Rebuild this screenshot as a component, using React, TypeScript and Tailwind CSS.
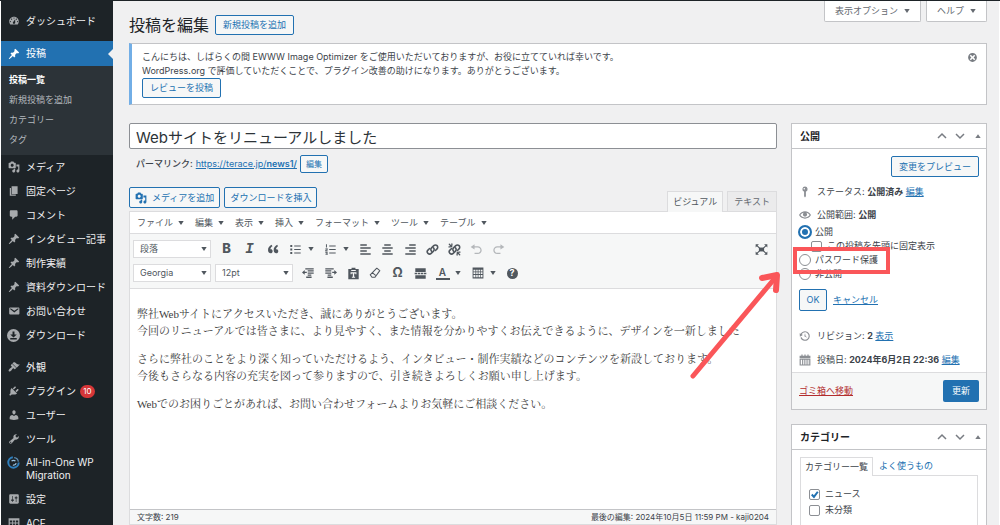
import { useState } from 'react';
import type { ReactNode } from 'react';
import clsx from 'clsx';

const paths = {
    dashboard: 'M3.76 16h12.48c1.1-1.37 1.76-3.11 1.76-5 0-4.42-3.58-8-8-8s-8 3.58-8 8c0 1.89.66 3.63 1.76 5zM10 4c.55 0 1 .45 1 1s-.45 1-1 1-1-.45-1-1 .45-1 1-1zM6 6c.55 0 1 .45 1 1s-.45 1-1 1-1-.45-1-1 .45-1 1-1zm8 0c.55 0 1 .45 1 1s-.45 1-1 1-1-.45-1-1 .45-1 1-1zm-5.37 5.55L12 7v6c0 1.1-.9 2-2 2s-2-.9-2-2c0-.57.24-1.08.63-1.45zM4 10c.55 0 1 .45 1 1s-.45 1-1 1-1-.45-1-1 .45-1 1-1zm12 0c.55 0 1 .45 1 1s-.45 1-1 1-1-.45-1-1 .45-1 1-1z',
    pin: 'M10.44 3.02l1.82-1.82 6.36 6.35-1.83 1.82c-1.05-.68-2.48-.57-3.41.36l-.75.75c-.92.93-1.04 2.35-.35 3.41l-1.83 1.82-2.41-2.41-2.8 2.79c-.42.42-3.38 2.71-3.8 2.29s1.86-3.39 2.28-3.81l2.79-2.79L4.1 9.36l1.83-1.82c1.05.69 2.48.57 3.4-.36l.75-.75c.93-.92 1.05-2.35.36-3.41z',
    media: 'M13 11V4c0-.55-.45-1-1-1h-1.67L9 1H5L3.67 3H2c-.55 0-1 .45-1 1v7c0 .55.45 1 1 1h10c.55 0 1-.45 1-1zM7 4.5c1.38 0 2.5 1.12 2.5 2.5S8.38 9.5 7 9.5 4.5 8.38 4.5 7 5.62 4.5 7 4.5zM14 6h5v10.5c0 1.38-1.12 2.5-2.5 2.5S14 17.88 14 16.5s1.12-2.5 2.5-2.5c.17 0 .34.02.5.05V9h-3V6zm-4 8.05V13h2v3.5c0 1.38-1.12 2.5-2.5 2.5S7 17.88 7 16.5 8.12 14 9.5 14c.17 0 .34.02.5.05z',
    page: 'M6 15V2h10v13H6zm-1 1h8v2H3V5h2v11z',
    comment: 'M5 2h9c1.1 0 2 .9 2 2v7c0 1.1-.9 2-2 2h-2l-5 5v-5H5c-1.1 0-2-.9-2-2V4c0-1.1.9-2 2-2z',
    mail: 'M3.87 4h13.25C18.37 4 19 4.59 19 5.79v8.42c0 1.19-.63 1.79-1.88 1.79H3.87c-1.25 0-1.88-.6-1.88-1.79V5.79c0-1.2.63-1.79 1.88-1.79zm6.62 8.6l6.74-5.53c.24-.2.43-.66.13-1.07-.29-.41-.82-.42-1.17-.17l-5.7 3.86L4.8 5.83c-.35-.25-.88-.24-1.17.17-.3.41-.11.87.13 1.07z',
    download: 'M10 0a10 10 0 1 0 0 20 10 10 0 0 0 0-20zM8.500 4h3v4.500H15l-5 4.500-5-4.500h3.500zM5 14h10v2H5z',
    appearance: 'M14.48 11.06L7.41 3.99l1.5-1.5c.5-.56 2.3-.47 3.51.32 1.21.8 1.43 1.28 2.91 2.1 1.18.64 2.45 1.26 4.45.85zm-.71.71L6.7 4.7 4.93 6.47c-.39.39-.39 1.02 0 1.41l1.06 1.06c.39.39.39 1.03 0 1.42-.6.6-1.43 1.11-2.21 1.69-.35.26-.7.53-1.01.84C1.43 14.23.4 16.08 1.4 17.07c.99 1 2.84-.03 4.18-1.36.31-.31.58-.66.85-1.02.57-.78 1.08-1.61 1.69-2.21.39-.39 1.02-.39 1.41 0l1.06 1.06c.39.39 1.02.39 1.41 0z',
    plugin: 'M13.11 4.36L9.87 7.6 8 5.73l3.24-3.24c.35-.34 1.05-.2 1.56.32.52.51.66 1.21.31 1.55zm-8 1.77l.91-1.12 9.01 9.01-1.19.84c-.71.71-2.63 1.16-3.82 1.16H6.14L4.9 17.26c-.59.59-1.54.59-2.12 0-.59-.58-.59-1.53 0-2.12l1.24-1.24v-3.88c0-1.13.4-3.19 1.09-3.89zm7.26 3.97l3.24-3.24c.34-.35 1.04-.21 1.55.31.52.51.66 1.21.31 1.55l-3.24 3.25z',
    user: 'M10 9.25c-2.27 0-2.73-3.44-2.73-3.44C7 4.02 7.82 2 9.97 2c2.16 0 2.98 2.02 2.71 3.81 0 0-.41 3.44-2.68 3.44zm0 2.57L12.72 10c2.39 0 4.52 2.33 4.52 4.53v2.49s-3.65 1.13-7.24 1.13c-3.65 0-7.24-1.13-7.24-1.13v-2.49c0-2.25 1.94-4.48 4.47-4.48z',
    tool: 'M16.68 9.77c-1.34 1.34-3.3 1.67-4.95.99l-5.41 6.52c-.99.99-2.59.99-3.58 0s-.99-2.59 0-3.57l6.52-5.42c-.68-1.65-.35-3.61.99-4.95 1.28-1.28 3.12-1.62 4.72-1.06l-2.89 2.89 2.82 2.82 2.86-2.87c.53 1.58.18 3.39-1.08 4.65zM3.81 16.21c.4.39 1.04.39 1.43 0 .4-.4.4-1.04 0-1.43-.39-.4-1.03-.4-1.43 0-.39.39-.39 1.03 0 1.43z',
    settings: 'M18 16V4c0-1.1-.9-2-2-2H4c-1.1 0-2 .9-2 2v12c0 1.1.9 2 2 2h12c1.1 0 2-.9 2-2zM8 11h1c.55 0 1 .45 1 1s-.45 1-1 1H8v1.5c0 .28-.22.5-.5.5s-.5-.22-.5-.5V13H6c-.55 0-1-.45-1-1s.45-1 1-1h1V5.5c0-.28.22-.5.5-.5s.5.22.5.5V11zm5-2h-1c-.55 0-1-.45-1-1s.45-1 1-1h1V5.5c0-.28.22-.5.5-.5s.5.22.5.5V7h1c.55 0 1 .45 1 1s-.45 1-1 1h-1v5.5c0 .28-.22.5-.5.5s-.5-.22-.5-.5V9z',
    widgets: 'M1 2h18v16H1zM3 6v3h4V6zM8.500 6v3h3V6zM13 6v3h4V6zM3 11v4h4v-4zM8.500 11v4h3v-4zM13 11v4h4v-4z',
    quote: 'M9.49 13.22c0-.74-.2-1.38-.61-1.9-.62-.78-1.83-.88-2.53-.72-.29-1.65 1.11-3.75 2.92-4.65L7.88 4c-2.73 1.3-5.42 4.28-4.96 8.05C3.21 14.43 4.59 16 6.54 16c.85 0 1.56-.25 2.12-.75s.83-1.18.83-2.03zm8.05 0c0-.74-.2-1.38-.61-1.9-.63-.78-1.83-.88-2.53-.72-.29-1.65 1.11-3.75 2.92-4.65L15.93 4c-2.73 1.3-5.41 4.28-4.95 8.05.29 2.38 1.66 3.95 3.61 3.95.85 0 1.56-.25 2.12-.75s.83-1.18.83-2.03z',
    ul: 'M2 3h3v3H2zM8 4h10v1.500H8zM2 8.500h3v3H2zM8 9.250h10v1.500H8zM2 14h3v3H2zM8 14.750h10v1.500H8z',
    ol: 'M3 2h1.500v5H3zM8 4h10v1.500H8zM2 8h3.500v3.500H3.500v.5H5.500v1H2v-3h2V9H2zM8 9.250h10v1.500H8zM2 14h3.500v4.500H2v-1h2v-.8H2.500v-1H4V15H2zM8 14.750h10v1.500H8z',
    alignLeft: 'M2 2h10v2.200H2zM2 6.600h16v2.200H2zM2 11.200h10v2.200H2zM2 15.800h16V18H2z',
    alignCenter: 'M5 2h10v2.200H5zM2 6.600h16v2.200H2zM5 11.200h10v2.200H5zM2 15.800h16V18H2z',
    alignRight: 'M8 2h10v2.200H8zM2 6.600h16v2.200H2zM8 11.200h10v2.200H8zM2 15.800h16V18H2z',
    undo: 'M12 5H7V2L1 6l6 4V7h5c2.2 0 4 1.8 4 4s-1.8 4-4 4H7v2h5c3.3 0 6-2.7 6-6s-2.7-6-6-6z',
    redo: 'M8 5h5V2l6 4-6 4V7H8c-2.2 0-4 1.8-4 4s1.8 4 4 4h5v2H8c-3.3 0-6-2.7-6-6s2.7-6 6-6z',
    outdent: 'M0 9l4.500-4v2.800H8v2.400H4.500V13zM5.500 2h14v2.200h-14zM9.500 5.500h10v2.200h-10zM9.500 9h10v2.200h-10zM9.500 12.500h6v2.200h-6zM7 16h9v2.200H7z',
    indent: 'M20 9l-4.500-4v2.800H12v2.400h3.500V13zM.5 2h14v2.200H.5zM.5 5.500h10v2.200H.5zM.5 9h10v2.200H.5zM4.500 12.500h6v2.200h-6zM4 16h9v2.200H4z',
    paste: 'M7 1h6v2h5v16H2V3h5zM5.500 8v3H7v-1h2v5H7.500v1.500h5V15H11v-5h2v1h1.500V8zM6.500 4.500v1.500h7V4.500z',
    readmore: 'M2 2h16v5.500H2zM1 9h4v2H1zM6 9h3.500v2H6zM10.500 9H14v2h-3.500zM15 9h4v2h-4zM2 12.500h16V18H2z',
    table: 'M1 1h18v18H1zM2.500 4.500v3h3.200v-3zM7 4.500v3h2.500v-3zM10.800 4.500v3h2.500v-3zM14.500 4.500v3h3v-3zM2.500 8.800v3h3.200v-3zM7 8.800v3h2.500v-3zM10.800 8.800v3h2.500v-3zM14.500 8.800v3h3v-3zM2.500 13.200v4h3.200v-4zM7 13.200v4h2.500v-4zM10.800 13.200v4h2.500v-4zM14.500 13.200v4h3v-4z',
    expand: 'M1 2h5.500L5 3.600 8.500 7h3L15 3.600 13.500 2H19v5l-1.600-1.500L14 8.500v3l3.400 3L19 13v5h-5.500l1.500-1.600-3.500-3.400h-3L5 16.400 6.500 18H1v-5l1.600 1.500L6 11.500v-3l-3.400-3L1 7z',
    history: 'M13.65 2.88c3.93 2.01 5.48 6.84 3.47 10.77s-6.83 5.48-10.77 3.47c-1.87-.96-3.2-2.56-3.86-4.4l1.64-1.03c.45 1.57 1.52 2.95 3.08 3.76 3.01 1.54 6.69.35 8.23-2.66 1.55-3.01.36-6.69-2.65-8.24C9.78 3.01 6.1 4.2 4.56 7.21l1.88.97-4.95 3.08-.39-5.82 1.78.91C4.9 2.4 9.75.89 13.65 2.88zm-4.36 7.83C9.11 10.53 9 10.28 9 10c0-.07.03-.12.04-.19h-.01L10 5l.97 4.81L14 13l-4.5-2.12.02-.02c-.08-.04-.16-.09-.23-.15z',
    eye: 'M19.7 9.4C17.7 6 14 3.9 10 3.9S2.3 6 .3 9.4L0 10l.3.6c2 3.4 5.7 5.5 9.7 5.5s7.7-2.1 9.7-5.5l.3-.6-.3-.6zM10 14.1c-3.1 0-6-1.6-7.7-4.1C3.6 8 5.7 6.6 8 6.1c-.9.6-1.5 1.7-1.5 2.9 0 1.9 1.6 3.5 3.5 3.5s3.5-1.6 3.5-3.5c0-1.2-.6-2.3-1.5-2.9 2.3.5 4.4 1.9 5.7 3.9-1.7 2.5-4.6 4.1-7.7 4.1z',
    status: 'M10 1a4.500 4.500 0 0 0-1.500 8.700V17l1.500 2 1.500-2V9.700A4.500 4.500 0 0 0 10 1zM8.800 3.200a1.300 1.300 0 1 1 0 2.600 1.300 1.300 0 0 1 0-2.600z',
    calendar: 'M4 1h2v2h3V1h2v2h3V1h2v2h3v4H1V3h3zM1 8h18v11H1zM3 9.500v8h2v-8zM6.500 9.500v8h1.500v-8zM9.500 9.500v8H11v-8zM12.500 9.500v8H14v-8zM15.500 9.500v8H17v-8z',
    dismiss: 'M10 2c4.42 0 8 3.58 8 8s-3.58 8-8 8-8-3.58-8-8 3.58-8 8-8zm5 11l-3-3 3-3-2-2-3 3-3-3-2 2 3 3-3 3 2 2 3-3 3 3z',
    caret: 'M1 3h18l-9 14z',
    caretUp: 'M1 17h18L10 4z',
};

type IconName = keyof typeof paths;

const Icon = ({ name, className = 'size-3' }: { name: IconName; className?: string }) => (
    <svg viewBox="0 0 20 20" className={clsx('shrink-0 fill-current', className)} fillRule="evenodd" aria-hidden="true">
        <path d={paths[name]} />
    </svg>
);

const Caret = () => <Icon name="caret" className="size-[6px]" />;

interface IMenuItem {
    label: string;
    icon: IconName;
    badge?: string;
    gap?: boolean;
}

const submenu = ['投稿一覧', '新規投稿を追加', 'カテゴリー', 'タグ'];

const menuTop: IMenuItem[] = [
    { label: 'メディア', icon: 'media' },
    { label: '固定ページ', icon: 'page' },
    { label: 'コメント', icon: 'comment' },
    { label: 'インタビュー記事', icon: 'pin' },
    { label: '制作実績', icon: 'pin' },
    { label: '資料ダウンロード', icon: 'pin' },
    { label: 'お問い合わせ', icon: 'mail' },
    { label: 'ダウンロード', icon: 'download' },
    { label: '外観', icon: 'appearance', gap: true },
    { label: 'プラグイン', icon: 'plugin', badge: '10' },
    { label: 'ユーザー', icon: 'user' },
    { label: 'ツール', icon: 'tool' },
];

const menuBottom: IMenuItem[] = [
    { label: '設定', icon: 'settings' },
    { label: 'ACF', icon: 'widgets' },
];

const SidebarItem = ({ label, icon, badge, gap }: IMenuItem) => (
    <li className={clsx(gap && 'mt-2')}>
        <a href="#" className="flex h-6 items-center pl-[6px] text-[10px] text-[#f0f0f1]">
            <span className="flex w-[13px] justify-center text-[#a7aaad]">
                <Icon name={icon} className={icon === 'download' ? 'size-[13px]' : 'size-3'} />
            </span>
            <span className="ml-[6px] whitespace-nowrap">{label}</span>
            {badge && (
                <span className="ml-1 flex h-[13px] w-[15px] items-center justify-center rounded-full bg-[#d63638] text-[8px] text-white">{badge}</span>
            )}
        </a>
    </li>
);

const Sidebar = () => (
    <nav className="w-28 shrink-0 overflow-hidden bg-[#1d2327] pt-2" aria-label="メインメニュー">
        <ul>
            <SidebarItem label="ダッシュボード" icon="dashboard" />
            <li className="mt-2">
                <a href="#" className="relative flex h-[25px] items-center bg-[#2271b1] pl-[6px] text-[10px] text-white">
                    <span className="flex w-[13px] justify-center"><Icon name="pin" /></span>
                    <span className="ml-[6px]">投稿</span>
                    <span className="absolute top-1/2 right-0 -translate-y-1/2 border-y-[5px] border-r-[5px] border-y-transparent border-r-[#f0f0f1]" />
                </a>
                <ul className="bg-[#2c3338] pt-1 pb-[5px]">
                    {submenu.map((item, index) => (
                        <li key={item}>
                            <a href="#" className={clsx('flex h-5 items-center pl-2 text-[9px]', index === 0 ? 'font-bold text-white' : 'text-[#b4b9be]')}>{item}</a>
                        </li>
                    ))}
                </ul>
            </li>
            {menuTop.map((item) => <SidebarItem key={item.label} {...item} />)}
            <li>
                <a href="#" className="flex py-[5px] pl-[6px] text-[10px] leading-[13px] text-[#f0f0f1]">
                    <svg viewBox="0 0 20 20" className="size-[13px] shrink-0 fill-none" aria-hidden="true">
                        <path d="M9 2a8 8 0 1 0 9 8" stroke="#2f7fbd" strokeWidth="3" />
                        <path d="M11 2.500a7.500 7.500 0 0 1 6.500 6" stroke="#5f8fb5" strokeWidth="2" />
                        <path d="M7 8a4 4 0 0 1 6 0M14 11a4 4 0 0 1-5 3" stroke="#9dc4e2" strokeWidth="1.800" />
                    </svg>
                    <span className="ml-[6px]">All-in-One WP<br />Migration</span>
                </a>
            </li>
            {menuBottom.map((item) => <SidebarItem key={item.label} {...item} />)}
        </ul>
    </nav>
);

const OutlineButton = ({ children, className }: { children: ReactNode; className?: string }) => (
    <button type="button" className={clsx('flex items-center justify-center rounded-[2px] border border-[#2271b1] bg-[#f6f7f7] whitespace-nowrap text-[#2271b1]', className)}>
        {children}
    </button>
);

const ScreenTab = ({ children }: { children: ReactNode }) => (
    <button type="button" className="flex h-[21px] items-center gap-[6px] rounded-b-[2px] border border-t-0 border-[#c3c4c7] bg-white px-[10px] text-[#646970]">
        {children}
        <Caret />
    </button>
);

const Notice = () => (
    <div className="relative border border-l-[3px] border-[#c3c4c7] border-l-[#72aee6] bg-white pt-[6px] pb-[6px] pl-[10px] leading-[14px]">
        <p>こんにちは、しばらくの間 EWWW Image Optimizer をご使用いただいておりますが、お役に立てていれば幸いです。</p>
        <p>WordPress.org で評価していただくことで、プラグイン改善の助けになります。ありがとうございます。</p>
        <OutlineButton className="h-5 px-[7px]">レビューを投稿</OutlineButton>
        <button type="button" aria-label="閉じる" className="absolute top-2 right-2 text-[#787c82]">
            <Icon name="dismiss" className="size-[11px]" />
        </button>
    </div>
);

const Tool = ({ label, narrow, children }: { label: string; narrow?: boolean; children: ReactNode }) => (
    <button type="button" aria-label={label} className={clsx('flex h-5 shrink-0 items-center justify-center', narrow ? 'w-[22px]' : 'w-[23px]')}>
        {children}
    </button>
);

const ToolMenu = ({ label }: { label: string }) => (
    <button type="button" aria-label={label} className="mr-1 flex h-5 w-2 shrink-0 items-center justify-center"><Caret /></button>
);

const ToolSelect = ({ label, options }: { label: string; options: string[] }) => (
    <span className="relative mr-1 w-[78px] shrink-0">
        <select aria-label={label} className="block h-[18px] w-full appearance-none border border-[#dcdcde] bg-white pl-[6px] text-[9px] text-[#50575e]">
            {options.map((option) => <option key={option}>{option}</option>)}
        </select>
        <span className="pointer-events-none absolute inset-y-0 right-1 flex items-center"><Caret /></span>
    </span>
);

const ChainIcon = ({ broken }: { broken?: boolean }) => (
    <svg viewBox="0 0 20 20" className="size-[13px] fill-none stroke-current" strokeWidth="2.4" strokeLinecap="round" aria-hidden="true">
        <path d="M8.500 12.500a3.500 3.500 0 0 1 0-5l3.500-3.500a3.500 3.500 0 0 1 5 5l-2.500 2.500" />
        <path d="M11.500 7.500a3.500 3.500 0 0 1 0 5L8 16a3.500 3.500 0 0 1-5-5l2.500-2.500" />
        {broken && <path d="M2 2l4 4M6 1.500v2M1.500 6h2M14 14l4 4M14 18.500v-2M18.500 14h-2" strokeWidth="2" />}
    </svg>
);

const menus = ['ファイル', '編集', '表示', '挿入', 'フォーマット', 'ツール', 'テーブル'];

const EditorToolbar = () => (
    <div className="border-b border-[#dcdcde] bg-[#f6f7f7] p-[3px] text-[#50575e]">
        <div className="flex h-6 items-center">
            <ToolSelect label="書式" options={['段落', '見出し 2', '見出し 3']} />
            <div className="flex items-center">
                <Tool label="太字"><b className="text-[13px] font-extrabold">B</b></Tool>
                <Tool label="イタリック"><i className="font-mono text-[14px] font-bold">I</i></Tool>
                <Tool label="引用"><Icon name="quote" className="size-[14px]" /></Tool>
                <Tool label="番号なしリスト"><Icon name="ul" className="size-[13px]" /></Tool>
                <ToolMenu label="番号なしリストの種類" />
                <Tool label="番号付きリスト"><Icon name="ol" className="size-[13px]" /></Tool>
                <ToolMenu label="番号付きリストの種類" />
                <Tool label="左寄せ" narrow><Icon name="alignLeft" className="size-[13px]" /></Tool>
                <Tool label="中央揃え"><Icon name="alignCenter" className="size-[13px]" /></Tool>
                <Tool label="右寄せ" narrow><Icon name="alignRight" className="size-[13px]" /></Tool>
                <Tool label="リンクの挿入" narrow><ChainIcon /></Tool>
                <Tool label="リンクの削除" narrow><ChainIcon broken /></Tool>
                <Tool label="取り消し" narrow><Icon name="undo" className="size-[13px] text-[#b4b7ba]" /></Tool>
                <Tool label="やり直し" narrow><Icon name="redo" className="size-[13px] text-[#b4b7ba]" /></Tool>
            </div>
            <div className="ml-auto">
                <Tool label="フルスクリーン">
                    <svg viewBox="0 0 20 20" className="size-[13px] fill-current stroke-current" aria-hidden="true">
                        <path d="M6 7h8v6H6z" stroke="none" />
                        <path d="M3 4l4 4M17 4l-4 4M3 16l4-4M17 16l-4-4" strokeWidth="1.600" />
                        <path d="M1 2h5L1 7zM19 2h-5l5 5zM1 18h5l-5-5zM19 18h-5l5-5z" stroke="none" />
                    </svg>
                </Tool>
            </div>
        </div>
        <div className="flex h-6 items-center">
            <ToolSelect label="フォント" options={['Georgia', 'Arial', 'Verdana']} />
            <ToolSelect label="フォントサイズ" options={['12pt', '14pt', '18pt']} />
            <Tool label="インデントを減らす" narrow><Icon name="outdent" /></Tool>
            <Tool label="インデントを増やす"><Icon name="indent" /></Tool>
            <Tool label="テキストとしてペースト" narrow><Icon name="paste" className="size-[13px]" /></Tool>
            <Tool label="書式設定をクリア" narrow>
                <svg viewBox="0 0 20 20" className="size-3 fill-none stroke-current" strokeWidth="1.800" strokeLinejoin="round" aria-hidden="true">
                    <path d="M13 2l5 4-8 11H5l-3-4zM5 9l6 5" />
                </svg>
            </Tool>
            <Tool label="特殊文字"><span className="text-[13px] font-bold">Ω</span></Tool>
            <Tool label="続きを読む" narrow><Icon name="readmore" className="size-[13px]" /></Tool>
            <Tool label="テキスト色"><span className="w-[14px] border-b-2 border-current text-[10px] leading-[11px] font-semibold">A</span></Tool>
            <ToolMenu label="テキスト色を選択" />
            <Tool label="テーブル"><Icon name="table" className="size-3" /></Tool>
            <ToolMenu label="テーブルメニュー" />
            <Tool label="ヘルプ" narrow>
                <span className="flex size-[11px] items-center justify-center rounded-full bg-[#50575e] text-[9px] font-bold text-white">?</span>
            </Tool>
        </div>
    </div>
);

const Editor = () => (
    <section className="mt-[14px] flex min-h-0 flex-1 flex-col">
        <div className="flex items-end justify-between">
            <div className="mb-[3px] flex gap-1">
                <OutlineButton className="h-[21px] gap-[5px] px-[5px]"><Icon name="media" />メディアを追加</OutlineButton>
                <OutlineButton className="h-[21px] px-[5px]">ダウンロードを挿入</OutlineButton>
            </div>
            <div className="flex gap-1">
                <button type="button" className="relative z-10 -mb-px h-[21px] border border-b-0 border-[#dcdcde] bg-[#f6f7f7] px-[5px] text-[#50575e]">ビジュアル</button>
                <button type="button" className="h-5 border border-b-0 border-[#dcdcde] bg-[#ebebec] px-[6px] text-[#646970]">テキスト</button>
            </div>
        </div>
        <div className="flex min-h-0 flex-1 flex-col border border-[#dcdcde] bg-white">
            <div className="flex h-[22px] shrink-0 items-center gap-[11px] border-b border-[#dcdcde] pl-[7px]">
                {menus.map((menu) => (
                    <button key={menu} type="button" className="flex items-center gap-[5px] text-[#50575e]">{menu}<Caret /></button>
                ))}
            </div>
            <EditorToolbar />
            <div
                role="textbox"
                aria-label="本文"
                aria-multiline="true"
                contentEditable
                suppressContentEditableWarning
                className="min-h-0 flex-1 space-y-[11px] overflow-hidden pt-[17px] pl-[7px] font-['Liberation_Serif','Noto_Serif_CJK_JP','Noto_Sans_CJK_JP',serif] text-[11px] leading-[17px] font-normal text-[#3c3c3c] outline-none"
            >
                <p>弊社Webサイトにアクセスいただき、誠にありがとうございます。<br />今回のリニューアルでは皆さまに、より見やすく、また情報を分かりやすくお伝えできるように、デザインを一新しました</p>
                <p>さらに弊社のことをより深く知っていただけるよう、インタビュー・制作実績などのコンテンツを新設しております。<br />今後もさらなる内容の充実を図って参りますので、引き続きよろしくお願い申し上げます。</p>
                <p>Webでのお困りごとがあれば、お問い合わせフォームよりお気軽にご相談ください。</p>
            </div>
            <div className="flex h-[15px] shrink-0 items-center justify-between border-t border-[#c3c4c7] bg-[#f6f7f7] px-[7px] text-[8px] text-[#3c434a]">
                <span>文字数: 219</span>
                <span>最後の編集: 2024年10月5日 11:59 PM - kaji0204</span>
            </div>
        </div>
    </section>
);

const PostBox = ({ title, children }: { title: string; children: ReactNode }) => (
    <section className="border border-[#c3c4c7] bg-white">
        <header className="flex h-[25px] items-center border-b border-[#c3c4c7] pr-[5px] pl-2 text-[#787c82]">
            <h2 className="flex-1 text-[10px] font-bold text-[#1d2327]">{title}</h2>
            <button type="button" aria-label="上に移動">
                <svg viewBox="0 0 10 10" className="size-[10px] fill-none stroke-current" strokeWidth="1.500"><path d="M1 7l4-4 4 4" /></svg>
            </button>
            <button type="button" aria-label="下に移動" className="ml-2">
                <svg viewBox="0 0 10 10" className="size-[10px] fill-none stroke-current" strokeWidth="1.500"><path d="M1 3l4 4 4-4" /></svg>
            </button>
            <button type="button" aria-label="パネルを切り替え" className="ml-[10px]"><Icon name="caretUp" className="size-[6px]" /></button>
        </header>
        {children}
    </section>
);

const Checkbox = ({ label, defaultChecked, className }: { label: string; defaultChecked?: boolean; className?: string }) => (
    <label className={clsx('flex items-center gap-[5px]', className)}>
        <span className="relative flex size-[11px]">
            <input type="checkbox" defaultChecked={defaultChecked} className="peer size-[11px] appearance-none rounded-[2px] border border-[#8c8f94] bg-white" />
            <svg viewBox="0 0 10 10" className="pointer-events-none absolute inset-0 hidden size-[11px] fill-none stroke-[#2271b1] peer-checked:block" strokeWidth="1.800">
                <path d="M2.500 5l2 2.200L8 2.500" />
            </svg>
        </span>
        {label}
    </label>
);

const Highlight = () => (
    <span className="pointer-events-none absolute -top-[6px] -left-[6px] z-20 block h-[27px] w-[97px] border-4 border-[#fa5659]">
        <svg viewBox="0 0 94 112" className="absolute top-[18px] -left-[109px] h-[112px] w-[94px] fill-none stroke-[#fa5659]" strokeLinecap="round" strokeLinejoin="round" aria-hidden="true">
            <path d="M5 107L87 9" strokeWidth="5" />
            <path d="M74 9l15-3-1 15" strokeWidth="6" />
        </svg>
    </span>
);

const radioClass = 'size-3 shrink-0 appearance-none rounded-full border border-[#8c8f94] bg-white checked:border-[#2271b1] checked:bg-[#2271b1] checked:shadow-[inset_0_0_0_2px_#fff,0_0_0_1px_#2271b1]';

const PublishBox = () => {
    const [visibility, setVisibility] = useState('public');

    const radio = (value: string, label: string) => (
        <label className="flex h-[14px] items-center gap-1">
            <input type="radio" name="visibility" value={value} checked={visibility === value} onChange={() => setVisibility(value)} className={radioClass} />
            {label}
        </label>
    );

    return (
        <PostBox title="公開">
            <div className="px-[7px] pt-[7px]">
                <div className="mb-[3px] flex justify-end"><OutlineButton className="h-[21px] px-[7px]">変更をプレビュー</OutlineButton></div>
                <div className="flex h-6 items-center gap-[6px]">
                    <Icon name="status" className="size-3 text-[#8c8f94]" />
                    <p>ステータス: <b>公開済み</b> <a href="#" className="text-[#2271b1] underline">編集</a></p>
                </div>
                <div className="flex h-[21px] items-center gap-[6px]">
                    <Icon name="eye" className="size-3 text-[#8c8f94]" />
                    <p>公開範囲: <b>公開</b></p>
                </div>
                {radio('public', '公開')}
                <Checkbox label="この投稿を先頭に固定表示" className="ml-3 h-[14px]" />
                <div className="relative">
                    {radio('password', 'パスワード保護')}
                    <Highlight />
                </div>
                {radio('private', '非公開')}
                <div className="mt-2 flex items-center gap-[6px]">
                    <OutlineButton className="h-[22px] w-7">OK</OutlineButton>
                    <a href="#" className="text-[#2271b1] underline">キャンセル</a>
                </div>
                <div className="mt-[13px] flex h-6 items-center gap-[6px]">
                    <Icon name="history" className="size-3 text-[#8c8f94]" />
                    <p>リビジョン: <b>2</b> <a href="#" className="text-[#2271b1] underline">表示</a></p>
                </div>
                <div className="flex h-6 items-center gap-[6px] whitespace-nowrap">
                    <Icon name="calendar" className="size-3 text-[#8c8f94]" />
                    <p>投稿日: <b>2024年6月2日 22:36</b> <a href="#" className="text-[#2271b1] underline">編集</a></p>
                </div>
            </div>
            <div className="flex items-center justify-between border-t border-[#dcdcde] bg-[#f6f7f7] px-[7px] py-[7px]">
                <a href="#" className="text-[#b32d2e] underline">ゴミ箱へ移動</a>
                <button type="button" className="h-[22px] rounded-[2px] bg-[#2271b1] px-[9px] text-white">更新</button>
            </div>
        </PostBox>
    );
};

const CategoryBox = () => (
    <PostBox title="カテゴリー">
        <div className="px-2 pt-[7px]">
            <div className="flex items-center">
                <button type="button" className="relative z-10 -mb-px h-[19px] border border-b-0 border-[#dcdcde] bg-white px-1">カテゴリー一覧</button>
                <button type="button" className="ml-[6px] text-[#2271b1]">よく使うもの</button>
            </div>
            <div className="h-[120px] border border-[#dcdcde] pt-[10px] pl-2">
                <Checkbox label="ニュース" defaultChecked className="h-4" />
                <Checkbox label="未分類" className="h-4" />
            </div>
        </div>
    </PostBox>
);

const App = () => {
    const [title, setTitle] = useState('Webサイトをリニューアルしました');

    return (
        <div lang="ja" className="flex h-screen flex-col overflow-hidden bg-white font-['Inter','Noto_Sans_CJK_JP',sans-serif] text-[9px] text-[#3c434a]">
            <div className="h-px shrink-0 bg-[#1d2327]" />
            <div className="flex min-h-0 flex-1 px-px">
                <Sidebar />
                <main className="flex min-w-0 flex-1 flex-col bg-[#f0f0f1] pr-3 pl-4">
                    <header className="flex h-[42px] shrink-0 items-start justify-between">
                        <div className="mt-[14px] flex h-5 items-center gap-[6px]">
                            <h1 className="text-[16px] text-[#1d2327]">投稿を編集</h1>
                            <OutlineButton className="h-5 px-[7px]">新規投稿を追加</OutlineButton>
                        </div>
                        <div className="flex gap-[5px]">
                            <ScreenTab>表示オプション</ScreenTab>
                            <ScreenTab>ヘルプ</ScreenTab>
                        </div>
                    </header>
                    <Notice />
                    <div className="mt-[18px] flex min-h-0 flex-1 gap-[14px]">
                        <div className="flex min-w-0 flex-1 flex-col">
                            <input
                                type="text"
                                aria-label="タイトル"
                                value={title}
                                onChange={(e) => setTitle(e.target.value)}
                                className="h-[26px] w-full shrink-0 rounded-[2px] border border-[#8c8f94] bg-white px-[6px] text-[15px] text-[#2c3338]"
                            />
                            <div className="mt-[6px] flex h-[18px] shrink-0 items-center gap-[3px] pl-[7px]">
                                <span className="font-medium">パーマリンク:</span>
                                <a href="#" className="text-[#2271b1] underline">https://terace.jp/<b className="font-semibold">news1/</b></a>
                                <OutlineButton className="h-[18px] w-7 text-[8px]">編集</OutlineButton>
                            </div>
                            <Editor />
                        </div>
                        <aside className="flex w-[196px] shrink-0 flex-col gap-[14px]">
                            <PublishBox />
                            <CategoryBox />
                        </aside>
                    </div>
                </main>
            </div>
        </div>
    );
};

export default App;
